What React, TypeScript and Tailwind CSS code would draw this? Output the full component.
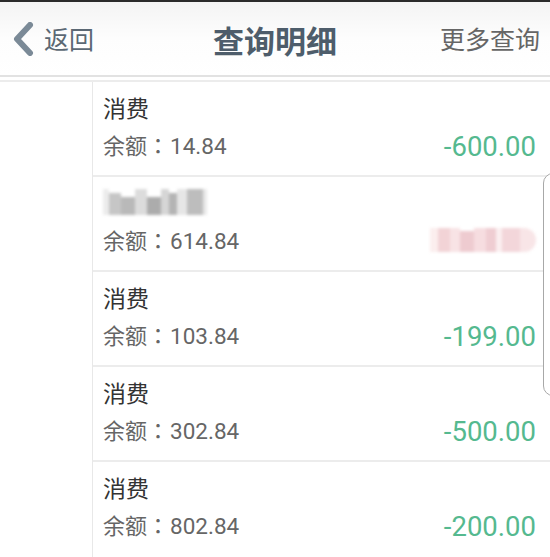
import React from "react";

const font = { fontFamily: '"Noto Sans CJK SC", "Noto Sans", sans-serif' };
const digitFont = { fontFamily: 'Roboto, "Noto Sans CJK SC", sans-serif' };

type Row = { title?: string; balance: string; amount?: string; blurred?: boolean };

const rows: Row[] = [
  { title: "消费", balance: "14.84", amount: "-600.00" },
  { balance: "614.84", blurred: true },
  { title: "消费", balance: "103.84", amount: "-199.00" },
  { title: "消费", balance: "302.84", amount: "-500.00" },
  { title: "消费", balance: "802.84", amount: "-200.00" },
];

function BlurTitle() {
  return (
    <div className="flex h-[30px] items-center blur-[1.5px]">
      <div className="flex h-[26px] w-[104px] items-stretch">
        <div className="w-[6px] bg-[#ececec]" />
        <div className="w-[12px] bg-[#c6c6c6] mt-[4px]" />
        <div className="w-[14px] bg-[#b9b9b9] mt-[8px]" />
        <div className="w-[12px] bg-[#dcdcdc]" />
        <div className="w-[14px] bg-[#acacac] mt-[8px]" />
        <div className="w-[8px] bg-[#d6d6d6]" />
        <div className="w-[8px] bg-[#b4b4b4] mt-[4px]" />
        <div className="w-[10px] bg-[#e6e6e6]" />
        <div className="w-[16px] bg-[#bdbdbd]" />
        <div className="w-[4px] bg-[#e9e9e9]" />
      </div>
    </div>
  );
}

function BlurAmount() {
  return (
    <div className="flex h-[24px] w-[106px] items-stretch blur-[1.5px]">
      <div className="w-[8px] bg-[#fbeeee]" />
      <div className="w-[12px] bg-[#f2d3d6]" />
      <div className="w-[10px] bg-[#f8e3e5]" />
      <div className="w-[14px] bg-[#eecbd0] mt-[3px]" />
      <div className="w-[12px] bg-[#f6dde0]" />
      <div className="w-[10px] bg-[#efcdd2]" />
      <div className="w-[6px] bg-[#fbeff0]" />
      <div className="w-[18px] bg-[#f3d6da]" />
      <div className="w-[16px] bg-[#f8e5e7] rounded-r-full" />
    </div>
  );
}

export default function App() {
  return (
    <div className="relative h-[557px] w-[550px] overflow-hidden bg-white" style={font}>
      <div className="h-[2px] bg-[#2b2b2b]" />
      <header className="flex h-[75px] items-center border-b-2 border-[#e2e2e2] bg-gradient-to-b from-[#f4f4f4] via-[#fdfdfd] to-[#ffffff]">
        <div className="flex w-[150px] items-center pl-[12px]">
          <svg width="22" height="34" viewBox="0 0 22 34">
            <polyline
              points="18,3 5,17 18,31"
              fill="none"
              stroke="#7b8a97"
              strokeWidth="6"
              strokeLinecap="round"
              strokeLinejoin="round"
            />
          </svg>
          <span className="ml-[10px] text-[25px] leading-none text-[#5b6874]">返回</span>
        </div>
        <div className="flex flex-1 justify-center pt-[2px]">
          <span className="text-[31px] font-bold leading-none text-[#4e5d6b]">查询明细</span>
        </div>
        <div className="flex w-[150px] justify-end pr-[10px]">
          <span className="text-[25px] leading-none text-[#666666]">更多查询</span>
        </div>
      </header>
      <div className="mt-[3px] flex border-b-2 border-t-2 border-[#ececec]">
        <div className="w-[93px] border-r border-[#e8e8e8]" />
        <div className="flex-1">
          {rows.map((r, i) => (
            <div
              key={i}
              className={`h-[95px] pl-[10px] pr-[14px] pt-[10px] ${i < rows.length - 1 ? "border-b-2 border-[#ececec]" : ""}`}
            >
              {r.blurred ? (
                <BlurTitle />
              ) : (
                <div className="h-[30px] text-[23px] leading-[30px] text-[#333333]">{r.title}</div>
              )}
              <div className="mt-[8px] flex h-[30px] items-center justify-between">
                <span className="flex items-baseline text-[22px] leading-[30px] text-[#666666]">
                  余额
                  <span
                    className="inline-block w-[22px] text-center [text-spacing-trim:space-all]"
                    style={{ fontFamily: '"Noto Sans CJK TC", sans-serif' }}
                  >
                    ：
                  </span>
                  <span className="ml-[1px] text-[22.5px]" style={digitFont}>{r.balance}</span>
                </span>
                {r.blurred ? (
                  <BlurAmount />
                ) : (
                  <span className="pt-[3px] text-[27.5px] leading-[30px] text-[#55b98f]" style={digitFont}>
                    {r.amount}
                  </span>
                )}
              </div>
            </div>
          ))}
        </div>
      </div>
      <div className="absolute left-[543px] top-[173px] h-[223px] w-[20px] rounded-l-[10px] border border-[#a8a8a8] bg-white" />
    </div>
  );
}
